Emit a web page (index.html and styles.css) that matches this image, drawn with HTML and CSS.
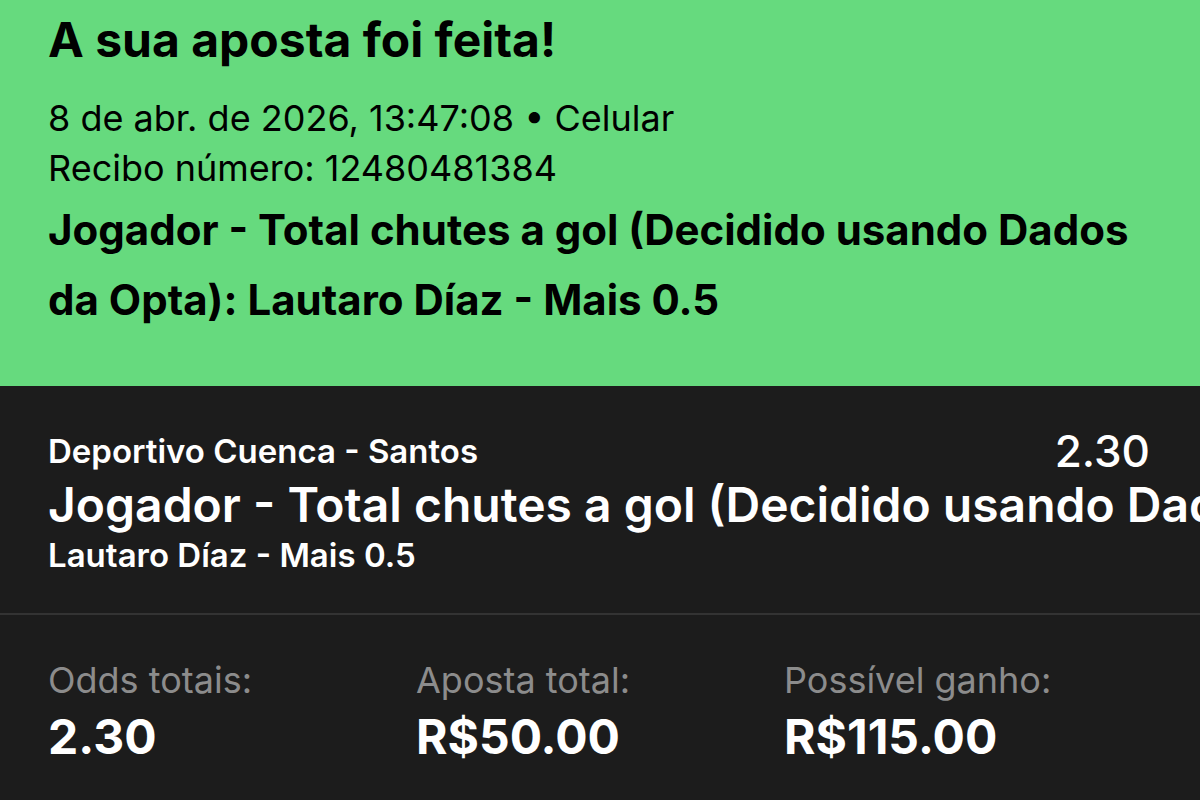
FILE: index.html
```html
<!DOCTYPE html>
<html>
  <head>
    <meta name="viewport" content="width=device-width, initial-scale=1" />
    <link rel="stylesheet" href="styles.css">
  </head>
  <body>
    <!-- Confirmation header -->
    <section class="confirm">
      <h1 class="confirm-title">A sua aposta foi feita!</h1>
      <p class="confirm-meta">8 de abr. de 2026, 13:47:08 • Celular</p>
      <p class="confirm-meta">Recibo número: 12480481384</p>
      <p class="confirm-market">
        Jogador - Total chutes a gol (Decidido usando Dados da Opta): Lautaro Díaz - Mais 0.5
      </p>
    </section>

    <!-- Bet details -->
    <section class="slip">
      <div class="slip-event">
        <div class="slip-row">
          <span class="slip-match">Deportivo Cuenca - Santos</span>
          <span class="slip-odd">2.30</span>
        </div>
        <div class="slip-market">Jogador - Total chutes a gol (Decidido usando Dados da Opta)</div>
        <div class="slip-pick">Lautaro Díaz - Mais 0.5</div>
      </div>

      <div class="slip-totals">
        <div class="total">
          <span class="total-label">Odds totais:</span>
          <span class="total-value">2.30</span>
        </div>
        <div class="total">
          <span class="total-label">Aposta total:</span>
          <span class="total-value">R$50.00</span>
        </div>
        <div class="total">
          <span class="total-label">Possível ganho:</span>
          <span class="total-value">R$115.00</span>
        </div>
      </div>
    </section>
  </body>
</html>
```

FILE: styles.css
```css
body {
  font-family: Inter, "Noto Sans", sans-serif;
  margin: 0;
  width: 1200px;
  height: 800px;
  overflow: hidden;
  background-color: #1c1c1c;
}

/* Green confirmation box */
.confirm {
  background-color: #66da7e;
  color: #000;
  height: 386px;
  box-sizing: border-box;
  padding: 12px 48px 0 48px;
}

.confirm-title {
  margin: 0 0 25px 0;
  font-size: 48px;
  font-weight: 700;
  line-height: 56px;
}

.confirm-meta {
  margin: 0;
  font-size: 36px;
  font-weight: 400;
  line-height: 50px;
}

.confirm-market {
  margin: 2px 0 0 0;
  font-size: 42px;
  font-weight: 700;
  line-height: 70px;
}

/* Dark slip */
.slip {
  color: #fff;
}

.slip-event {
  padding: 43px 0 0 48px;
  height: 229px;
  box-sizing: border-box;
  border-bottom: 2px solid #333333;
  white-space: nowrap;
  overflow: hidden;
}

.slip-row {
  display: flex;
  justify-content: space-between;
  align-items: center;
  height: 44px;
  padding-right: 50px;
}

.slip-match {
  font-size: 33px;
  font-weight: 600;
  line-height: 44px;
}

.slip-odd {
  font-size: 44px;
  font-weight: 500;
  line-height: 44px;
}

.slip-market {
  font-size: 48px;
  font-weight: 600;
  line-height: 64px;
}

.slip-pick {
  font-size: 33px;
  font-weight: 600;
  line-height: 36px;
}

.slip-totals {
  display: grid;
  grid-template-columns: 368px 368px 368px;
  padding: 43px 48px 0 48px;
}

.total {
  display: flex;
  flex-direction: column;
  gap: 7px;
}

.total-label {
  color: #8c8c8c;
  font-size: 36px;
  line-height: 44px;
}

.total-value {
  font-size: 48px;
  font-weight: 700;
  line-height: 56px;
}
```
